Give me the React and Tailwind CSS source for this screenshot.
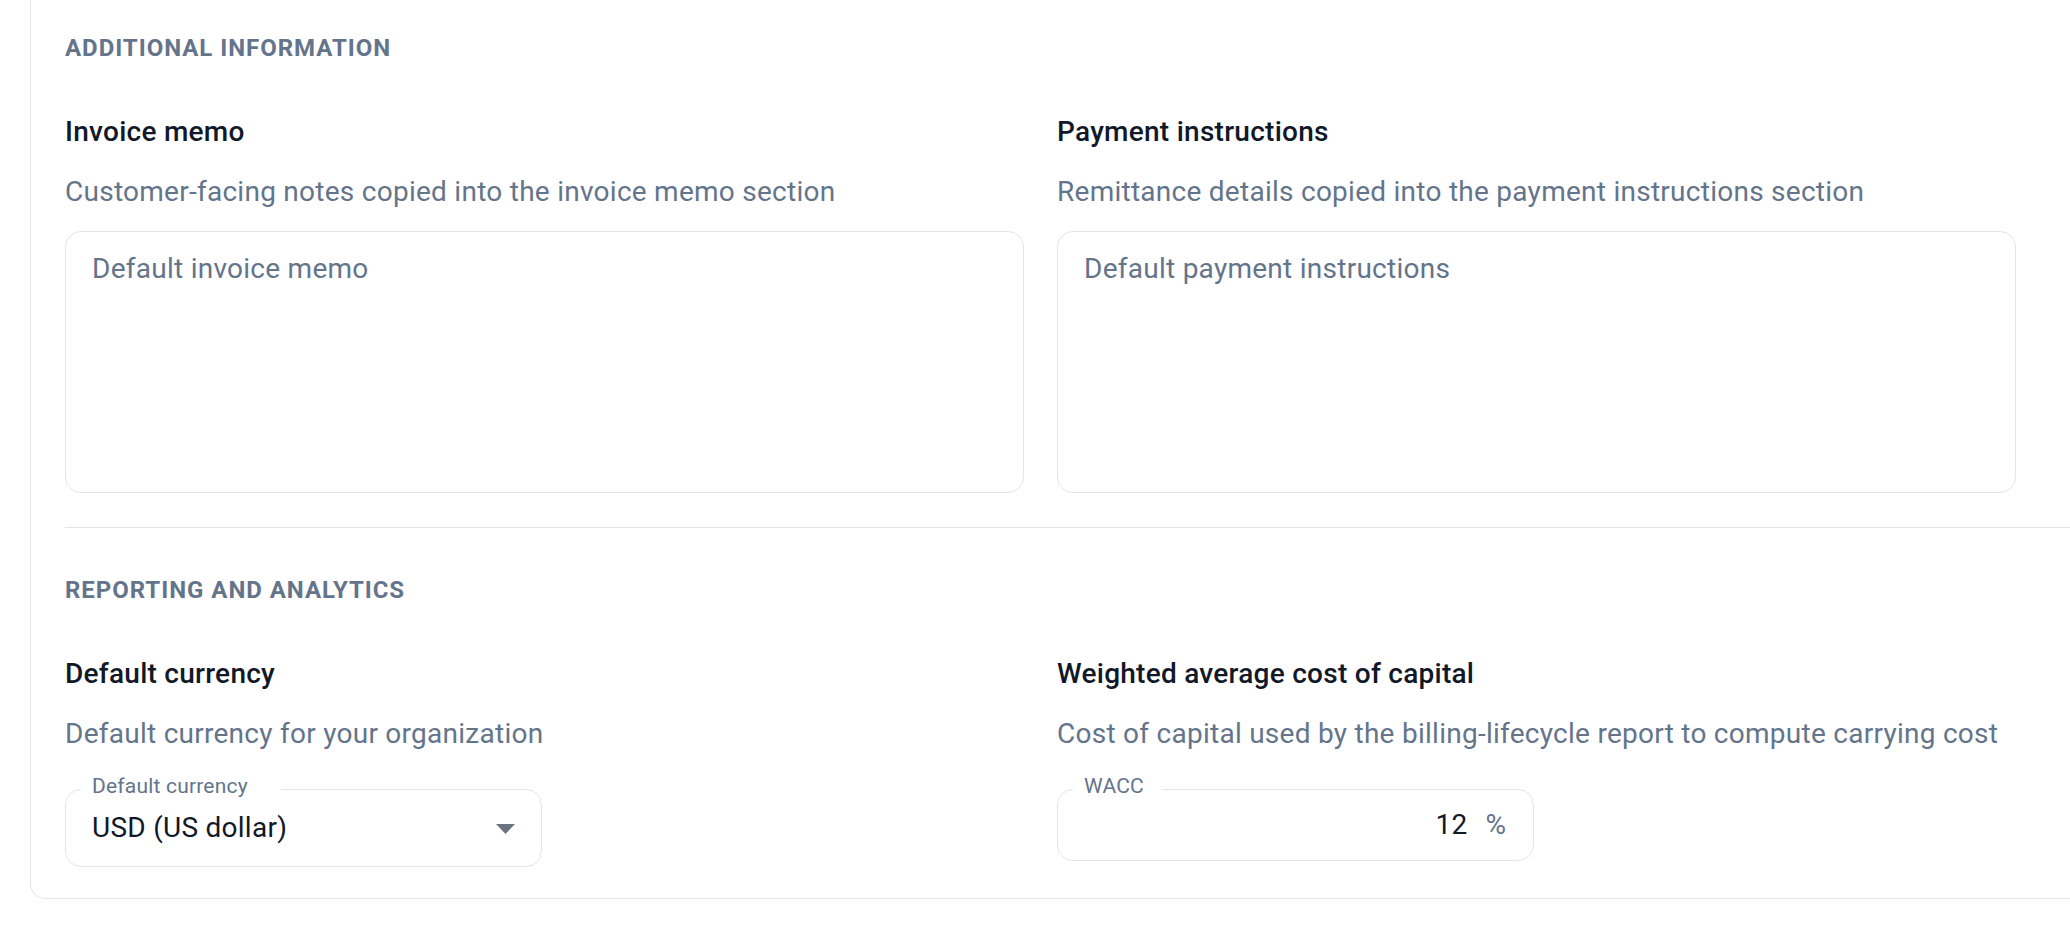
import React from "react";

const font = { fontFamily: "Roboto, 'Noto Sans', Arial, sans-serif" };

function SectionHeading({ children, className = "" }) {
  return (
    <div
      className={
        "text-[24px] leading-[32px] font-bold uppercase tracking-[0.04em] text-[#64748b] " +
        className
      }
    >
      {children}
    </div>
  );
}

function FieldTitle({ children }) {
  return (
    <div className="mt-[50px] text-[28px] leading-[36px] font-medium tracking-[0.00938em] text-[#111827]">
      {children}
    </div>
  );
}

function FieldDesc({ children }) {
  return (
    <div className="mt-[24px] text-[28px] leading-[36px] tracking-[0.00938em] text-[#64748b] whitespace-nowrap">
      {children}
    </div>
  );
}

function Memo({ placeholder }) {
  return (
    <textarea
      placeholder={placeholder}
      className="mt-[21px] block h-[262px] w-full resize-none rounded-[16px] border border-[#e4e4ec] bg-white px-[26px] pt-[19px] text-[28px] leading-[36px] tracking-[0.00938em] text-[#111827] outline-none placeholder:text-[#64748b]"
      style={font}
    />
  );
}

function Outlined({ label, notchWidth, height, children }) {
  return (
    <div
      className="relative mt-[37px] w-[477px] rounded-[16px] border border-[#e4e4ec] bg-white"
      style={{ height }}
    >
      <span
        className="absolute left-[15px] top-[-16px] bg-white pl-[11px] text-[21px] leading-[24px] tracking-[0.00938em] text-[#64748b] whitespace-nowrap"
        style={{ width: notchWidth }}
      >
        {label}
      </span>
      {children}
    </div>
  );
}

export default function App() {
  return (
    <div className="w-[2070px] h-[930px] overflow-hidden bg-white" style={font}>
      <div className="ml-[30px] w-[2120px] rounded-b-[15px] border-x border-b border-[#e4e4ec] pl-[34px] pt-[32px] pb-[31px]">
        <SectionHeading>Additional information</SectionHeading>
        <div className="grid w-[1951px] grid-cols-[959px_959px] gap-x-[33px]">
          <div className="flex flex-col">
            <FieldTitle>Invoice memo</FieldTitle>
            <FieldDesc>Customer-facing notes copied into the invoice memo section</FieldDesc>
            <Memo placeholder="Default invoice memo" />
          </div>
          <div className="flex flex-col">
            <FieldTitle>Payment instructions</FieldTitle>
            <FieldDesc>Remittance details copied into the payment instructions section</FieldDesc>
            <Memo placeholder="Default payment instructions" />
          </div>
        </div>

        <div className="mt-[34px] h-px bg-[#e4e4ec]" />

        <SectionHeading className="mt-[46px]">Reporting and analytics</SectionHeading>
        <div className="grid w-[1951px] grid-cols-[959px_959px] gap-x-[33px]">
          <div className="flex flex-col">
            <FieldTitle>Default currency</FieldTitle>
            <FieldDesc>Default currency for your organization</FieldDesc>
            <Outlined label="Default currency" notchWidth={200} height={78}>
              <div className="flex h-full items-center justify-between pl-[26px] pr-[26px]">
                <span className="text-[28px] leading-[36px] tracking-[0.00938em] text-[#111827]">USD (US dollar)</span>
                <svg width="19" height="10" viewBox="0 0 19 10" className="mt-[2px]">
                  <polygon points="0,0 19,0 9.5,10" fill="#6b7280" />
                </svg>
              </div>
            </Outlined>
          </div>
          <div className="flex flex-col">
            <FieldTitle>Weighted average cost of capital</FieldTitle>
            <FieldDesc>Cost of capital used by the billing-lifecycle report to compute carrying cost</FieldDesc>
            <Outlined label="WACC" notchWidth={89} height={72}>
              <div className="flex h-full items-center justify-end pr-[27px]">
                <span className="text-[28px] leading-[36px] tracking-[0.00938em] text-[#111827]">12</span>
                <span className="ml-[18px] text-[28px] leading-[36px] text-[#64748b]">%</span>
              </div>
            </Outlined>
          </div>
        </div>
      </div>
    </div>
  );
}
